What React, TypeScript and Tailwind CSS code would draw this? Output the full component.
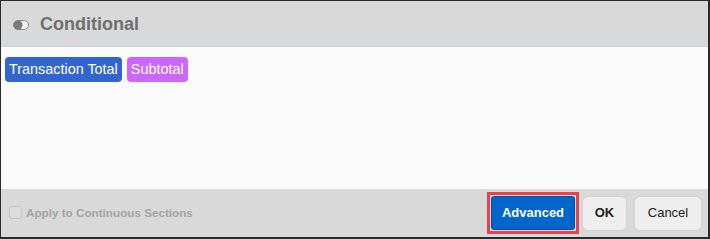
export default function App() {
  return (
    <div className="h-[239px] w-[710px] font-['Liberation_Sans',Arial,sans-serif]">
      <div className="flex h-full flex-col border-t border-l border-r-2 border-b-2 border-[#2a2a2a] bg-[#fafafa]">
        <div className="flex h-[46px] shrink-0 items-center gap-[11px] border-b border-[#c5d6e6] bg-[#d9d9d9] pl-[12px] pt-[2px]">
          <svg width="16" height="10" viewBox="0 0 16 10">
            <rect x="0.5" y="0.5" width="15" height="9" rx="4.5" fill="#f2f2f2" stroke="#8a8a8a" />
            <circle cx="5" cy="5" r="4.5" fill="#7a7a7a" />
          </svg>
          <span className="text-[18px] font-bold text-[#6e6e6e]">Conditional</span>
        </div>
        <div className="flex-1 px-[4px] pt-[10px]">
          <div className="flex gap-[5px]">
            <span className="flex h-[25px] items-center rounded-[4px] bg-[#3366cc] px-[4px] text-[14.4px] text-white">
              Transaction Total
            </span>
            <span className="flex h-[25px] items-center rounded-[4px] bg-[#cc66ff] px-[4px] text-[14.4px] text-white">
              Subtotal
            </span>
          </div>
        </div>
        <div className="flex h-[48px] shrink-0 items-center bg-[#d9d9d9] pl-[8px] pr-[6px]">
          <label className="flex items-center gap-[4px]">
            <span className="h-[13px] w-[13px] rounded-[3px] border border-[#c4c4c4] bg-[#dcdcdc]" />
            <span className="text-[11.7px] font-bold text-[#a3a3a3]">Apply to Continuous Sections</span>
          </label>
          <div className="ml-auto flex items-center">
            <div className="border-[3px] border-[#e8434b] p-px">
              <button className="h-[34px] w-[84px] rounded-[3px] border border-[#0a4f9c] bg-[#0066cc] text-[13px] font-bold text-white">
                Advanced
              </button>
            </div>
            <button className="ml-[3px] h-[35px] w-[45px] rounded-[6px] border border-[#d2d2d2] bg-[#eeeeee] text-[13px] font-bold text-[#222]">
              OK
            </button>
            <button className="ml-[7px] h-[35px] w-[68px] rounded-[6px] border border-[#d2d2d2] bg-[#eeeeee] text-[13px] text-[#222]">
              Cancel
            </button>
          </div>
        </div>
      </div>
    </div>
  );
}
